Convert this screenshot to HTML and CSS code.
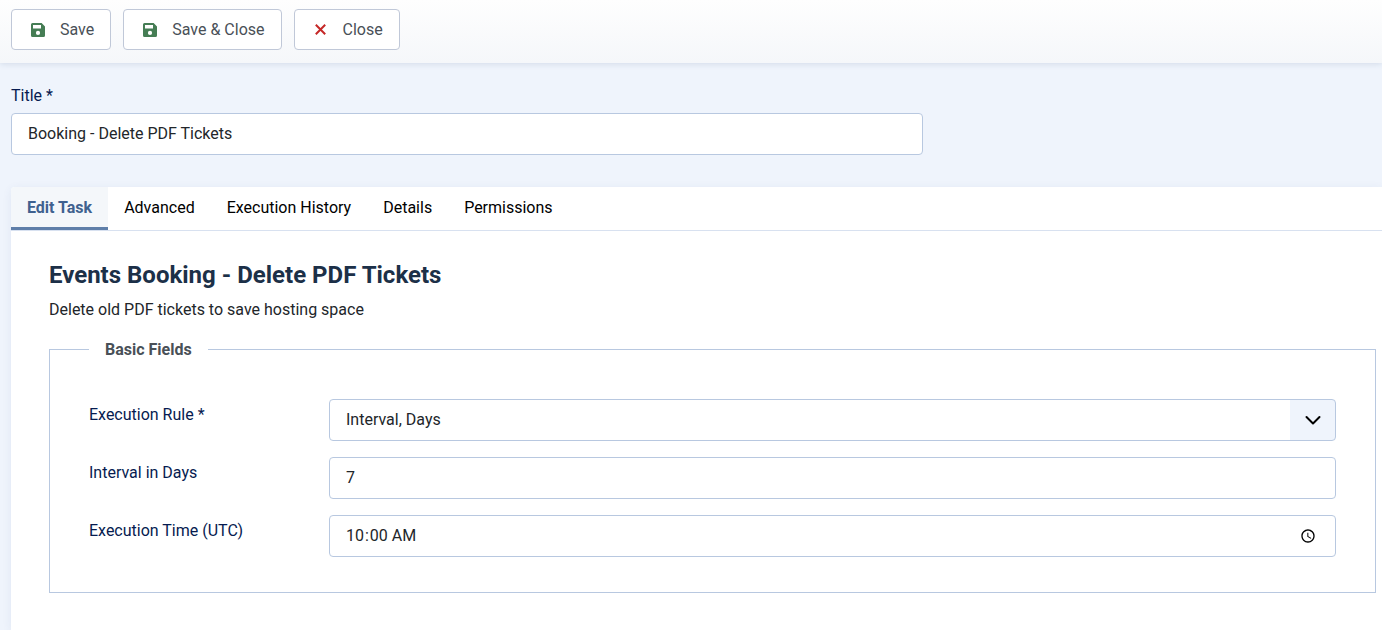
FILE: index.html
```html
<!DOCTYPE html>
<html lang="en">

<head>
    <meta charset="UTF-8">
    <meta name="viewport" content="width=device-width, initial-scale=1.0">
    <title>Edit Task</title>
    <link rel="stylesheet" href="styles.css">
</head>

<body>

    <header class="toolbar">
        <button type="submit" form="task-form" class="button">
            <svg class="icon icon-save" viewBox="0 0 14 14" aria-hidden="true">
                <path fill-rule="evenodd" d="M1.5 0H10.6L14 3.4V12.5Q14 14 12.5 14H1.5Q0 14 0 12.5V1.5Q0 0 1.5 0ZM2 2V5.5H10V2ZM7 7.8A2.1 2.1 0 1 0 7 12A2.1 2.1 0 1 0 7 7.8Z"/>
            </svg>
            Save
        </button>
        <button type="submit" form="task-form" class="button">
            <svg class="icon icon-save" viewBox="0 0 14 14" aria-hidden="true">
                <path fill-rule="evenodd" d="M1.5 0H10.6L14 3.4V12.5Q14 14 12.5 14H1.5Q0 14 0 12.5V1.5Q0 0 1.5 0ZM2 2V5.5H10V2ZM7 7.8A2.1 2.1 0 1 0 7 12A2.1 2.1 0 1 0 7 7.8Z"/>
            </svg>
            Save &amp; Close
        </button>
        <button type="button" class="button">
            <svg class="icon icon-close" viewBox="0 0 14 14" aria-hidden="true">
                <path d="M1.8 1.8L11.2 11.2M11.2 1.8L1.8 11.2"/>
            </svg>
            Close
        </button>
    </header>

    <form id="task-form" class="task-form">
        <div class="title-row">
            <label for="title">Title *</label>
            <input type="text" id="title" class="form-control" value="Booking - Delete PDF Tickets" required>
        </div>

        <div class="card">
            <nav class="tabs">
                <a href="#general" class="tab active">Edit Task</a>
                <a href="#advanced" class="tab">Advanced</a>
                <a href="#history" class="tab">Execution History</a>
                <a href="#details" class="tab">Details</a>
                <a href="#permissions" class="tab">Permissions</a>
            </nav>

            <section id="general" class="tab-content">
                <h2>Events Booking - Delete PDF Tickets</h2>
                <p>Delete old PDF tickets to save hosting space</p>

                <fieldset>
                    <legend>Basic Fields</legend>
                    <div class="control-group">
                        <label for="rule">Execution Rule *</label>
                        <select id="rule" class="form-control form-select">
                            <option>Interval, Minutes</option>
                            <option>Interval, Hours</option>
                            <option selected>Interval, Days</option>
                            <option>Interval, Months</option>
                        </select>
                    </div>
                    <div class="control-group">
                        <label for="interval">Interval in Days</label>
                        <input type="number" id="interval" class="form-control" value="7">
                    </div>
                    <div class="control-group">
                        <label for="time">Execution Time (UTC)</label>
                        <input type="time" id="time" class="form-control" value="10:00">
                    </div>
                </fieldset>
            </section>
        </div>
    </form>

</body>

</html>
```
FILE: styles.css
```css
* {
    box-sizing: border-box;
}

body {
    margin: 0;
    min-height: 100vh;
    display: flex;
    flex-direction: column;
    font-family: Roboto, "Liberation Sans", sans-serif;
    font-size: 16px;
    line-height: 24px;
    color: #22262a;
    background: #eff4fc;
}

/* Toolbar */
.toolbar {
    display: flex;
    flex-wrap: wrap;
    gap: 12px;
    padding: 9px 11px 13px;
    background: linear-gradient(#fefefe, #f5f7fa);
    box-shadow: 0 1px 6px rgba(50, 80, 120, 0.15);
}

.button {
    display: flex;
    align-items: center;
    gap: 15px;
    height: 41px;
    padding: 0 16px 0 19px;
    font: inherit;
    color: #495057;
    background: #fff;
    border: 1px solid #c0c8d8;
    border-radius: 4px;
    cursor: pointer;
}

.icon {
    width: 14px;
    height: 14px;
}

.icon-save {
    fill: #457d54;
}

.icon-close {
    fill: none;
    stroke: #c52827;
    stroke-width: 2;
}

/* Form */
.task-form {
    flex: 1;
    display: flex;
    flex-direction: column;
    padding-left: 11px;
}

.title-row {
    width: 67%;
    padding: 21px 7px 32px 0;
}

.title-row label {
    display: block;
    margin-bottom: 5px;
}

label {
    color: #061b50;
}

.form-control {
    display: block;
    width: 100%;
    height: 42px;
    padding: 7px 16px 9px;
    font: inherit;
    color: #22262a;
    background: #fff;
    border: 1px solid #b8c8e0;
    border-radius: 4px;
}

.form-control[type="number"] {
    appearance: textfield;
}

.form-control[type="time"] {
    padding: 8px 15px;
}

.form-select {
    appearance: none;
    padding: 8px 60px 8px 16px;
    background:
        url("data:image/svg+xml,%3Csvg xmlns='http://www.w3.org/2000/svg' viewBox='0 0 16 10'%3E%3Cpath d='M1.5 2L8 8.5L14.5 2' fill='none' stroke='%23000' stroke-width='2' stroke-linecap='round' stroke-linejoin='round'/%3E%3C/svg%3E") no-repeat right 14px center / 16px 10px,
        linear-gradient(#eff4fc, #eff4fc) no-repeat right / 45px 100%,
        #fff;
}

/* Tabs */
.card {
    flex: 1;
    background: #fff;
    border-top-left-radius: 4px;
    box-shadow: 0 2px 10px rgba(50, 80, 140, 0.08);
}

.tabs {
    display: flex;
    flex-wrap: wrap;
    border-bottom: 1px solid #d8e1f0;
}

.tab {
    padding: 9px 16px 10px;
    color: #000;
    text-decoration: none;
}

.tab.active {
    padding-bottom: 7px;
    font-weight: bold;
    color: #3f618f;
    background: #f4f7fa;
    border-bottom: 3px solid #5f7fa9;
    border-top-left-radius: 4px;
}

.tab-content {
    padding: 28px 6px 36px 38px;
}

h2 {
    margin: 0 0 7px;
    font-size: 24px;
    line-height: 32px;
    color: #1c3048;
}

p {
    margin: 0 0 14px;
}

/* Fields */
fieldset {
    min-width: 0;
    margin: 0;
    padding: 37px 39px 35px;
    border: 1px solid #b8c8e0;
}

legend {
    padding: 2px 16px 0;
    font-weight: bold;
    color: #495057;
}

.control-group {
    display: grid;
    grid-template-columns: 240px 1fr;
}

.control-group + .control-group {
    margin-top: 16px;
}

.control-group label {
    padding-top: 4px;
}

@media (max-width: 767px) {
    .title-row {
        width: 100%;
    }

    .control-group {
        grid-template-columns: 1fr;
        gap: 6px;
    }
}
```
